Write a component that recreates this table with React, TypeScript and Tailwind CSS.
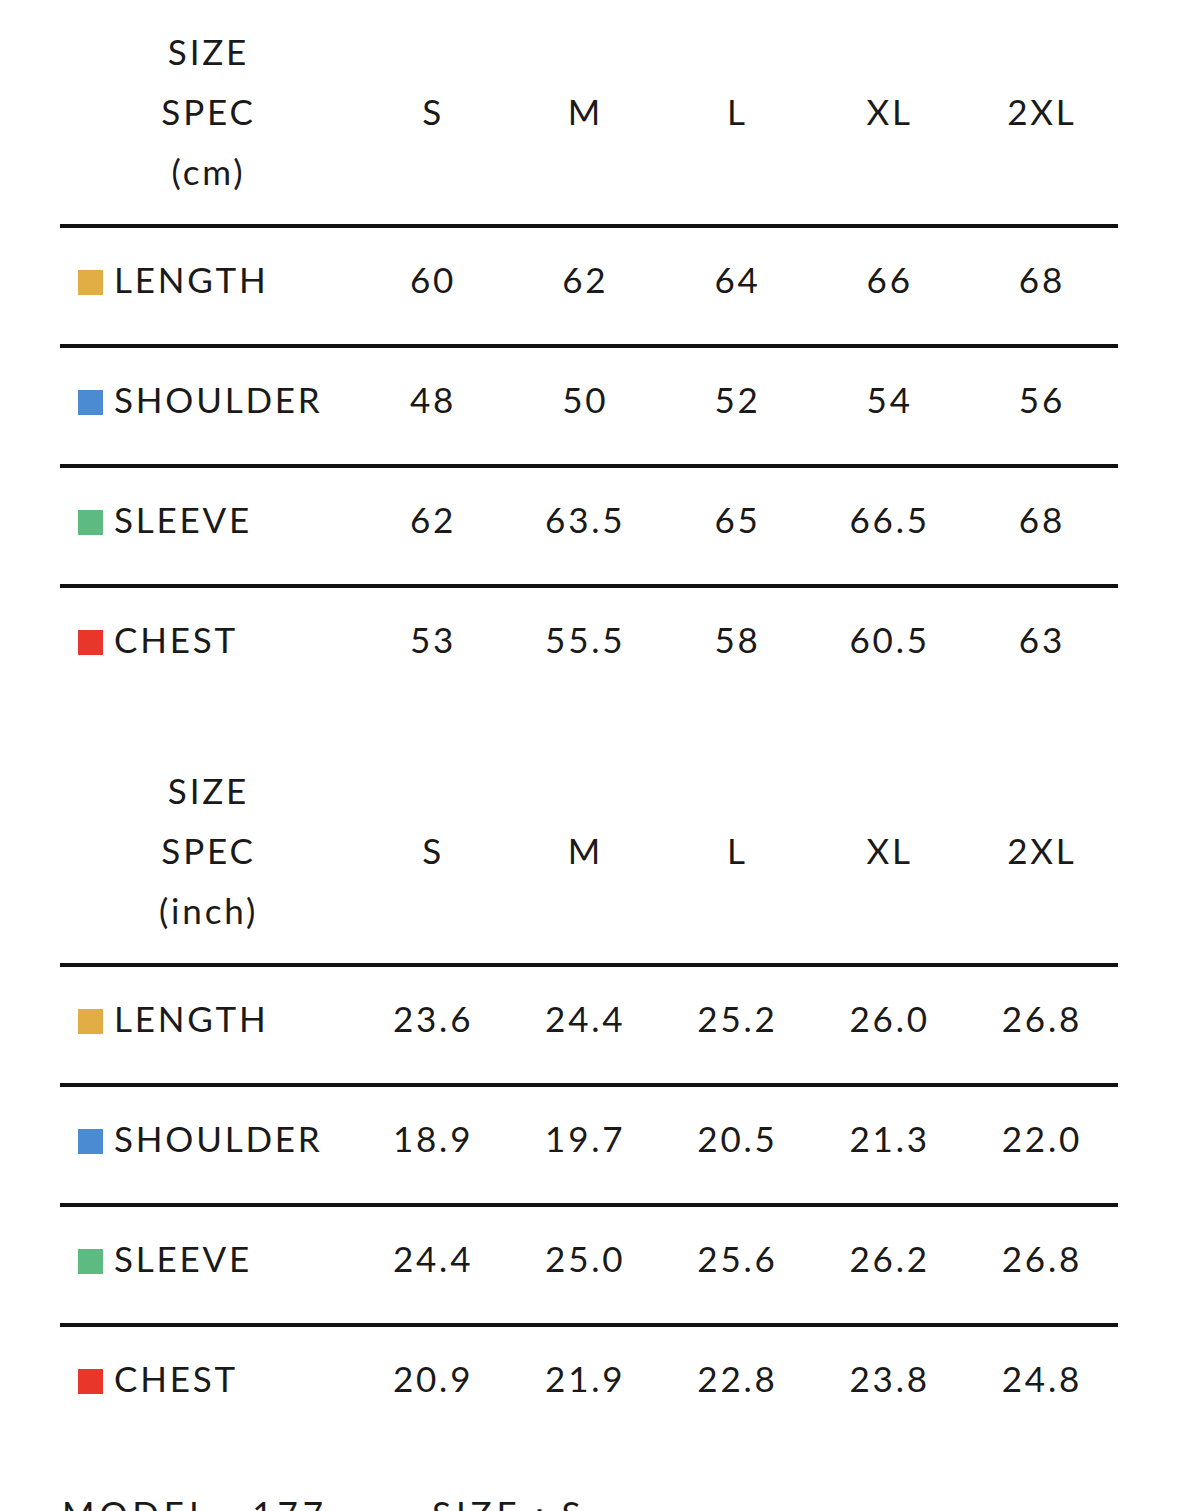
const sizes = ["S", "M", "L", "XL", "2XL"];

type Row = { label: string; color: string; values: string[] };

const cmRows: Row[] = [
  { label: "LENGTH", color: "bg-[#e0ae45]", values: ["60", "62", "64", "66", "68"] },
  { label: "SHOULDER", color: "bg-[#4b8bd1]", values: ["48", "50", "52", "54", "56"] },
  { label: "SLEEVE", color: "bg-[#5dbb82]", values: ["62", "63.5", "65", "66.5", "68"] },
  { label: "CHEST", color: "bg-[#e8362b]", values: ["53", "55.5", "58", "60.5", "63"] },
];

const inchRows: Row[] = [
  { label: "LENGTH", color: "bg-[#e0ae45]", values: ["23.6", "24.4", "25.2", "26.0", "26.8"] },
  { label: "SHOULDER", color: "bg-[#4b8bd1]", values: ["18.9", "19.7", "20.5", "21.3", "22.0"] },
  { label: "SLEEVE", color: "bg-[#5dbb82]", values: ["24.4", "25.0", "25.6", "26.2", "26.8"] },
  { label: "CHEST", color: "bg-[#e8362b]", values: ["20.9", "21.9", "22.8", "23.8", "24.8"] },
];

function SpecTable({ unit, rows }: { unit: string; rows: Row[] }) {
  return (
    <div className="w-[1058px]">
      {/* header */}
      <div className="grid h-[224px] grid-cols-[297px_repeat(5,1fr)] items-center pb-[2px]">
        <div className="flex flex-col items-center leading-[60px]">
          <span>SIZE</span>
          <span>SPEC</span>
          <span>({unit})</span>
        </div>
        {sizes.map((s) => (
          <div key={s} className="text-center">
            {s}
          </div>
        ))}
      </div>
      {rows.map((row) => (
        <div
          key={row.label}
          className="grid h-[120px] grid-cols-[297px_repeat(5,1fr)] items-center border-t-4 border-[#111] pb-[13px]"
        >
          <div className="flex items-center pl-[18px]">
            <span className={`mr-[11px] h-[25px] w-[25px] shrink-0 translate-y-[3px] ${row.color}`} />
            <span>{row.label}</span>
          </div>
          {row.values.map((v, j) => (
            <div key={j} className="text-center">
              {v}
            </div>
          ))}
        </div>
      ))}
    </div>
  );
}

export default function App() {
  return (
    <div
      className="h-[1511px] w-[1179px] overflow-hidden bg-white pl-[60px] text-[35px] leading-none tracking-[0.08em] text-[#1a1a1a]"
      style={{ fontFamily: "Lato, 'Noto Sans', sans-serif" }}
    >
      <SpecTable unit="cm" rows={cmRows} />
      <div className="h-[35px]" />
      <SpecTable unit="inch" rows={inchRows} />
      <div className="mt-[53px] flex pl-[2px] tracking-[0.14em]">
        <span className="w-[370px] whitespace-pre">MODEL   177</span>
        <span>SIZE：S</span>
      </div>
    </div>
  );
}
